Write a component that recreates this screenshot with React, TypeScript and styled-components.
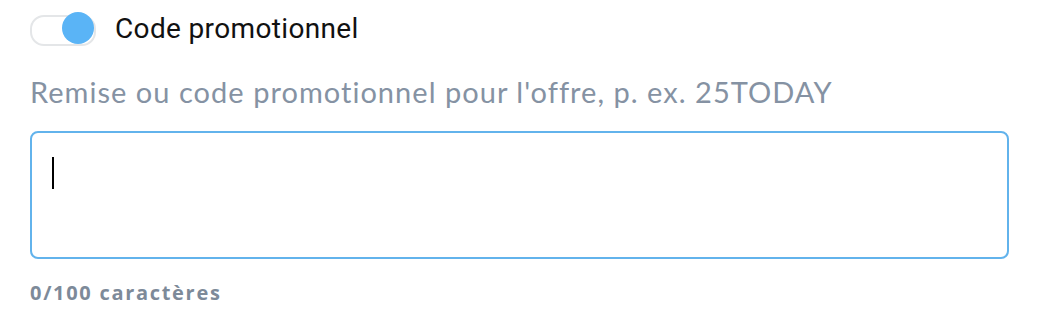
import React, { useState } from "react";
import styled, { createGlobalStyle } from "styled-components";

const Global = createGlobalStyle`
  html, body { margin: 0; padding: 0; background: #ffffff; }
  * { box-sizing: border-box; }
`;

const Page = styled.div`
  display: flex;
  flex-direction: column;
  padding: 12px 37px 0 30px;
  width: 1046px;
`;

const ToggleRow = styled.div`
  display: flex;
  align-items: center;
  gap: 21px;
  height: 32px;
`;

const Track = styled.button<{ $on: boolean }>`
  position: relative;
  width: 64px;
  height: 32px;
  padding: 0;
  border: none;
  background: transparent;
  cursor: pointer;
  flex-shrink: 0;
  &::before {
    content: "";
    position: absolute;
    left: 0;
    top: 3px;
    width: 62px;
    height: 27px;
    border-radius: 14px;
    border: 2px solid #e4e6e8;
    background: #ffffff;
  }
`;

const Knob = styled.span<{ $on: boolean }>`
  position: absolute;
  top: 0;
  left: ${(p) => (p.$on ? "32px" : "0")};
  width: 32px;
  height: 32px;
  border-radius: 50%;
  background: #5ab4f6;
`;

const ToggleLabel = styled.span`
  font-family: Roboto, "Liberation Sans", sans-serif;
  font-size: 28px;
  color: #111111;
  letter-spacing: 0.35px;
`;

const Hint = styled.div`
  margin-top: 31px;
  font-family: Lato, "Liberation Sans", sans-serif;
  font-size: 29px;
  letter-spacing: 1.03px;
  color: #8592a3;
  line-height: 34px;
`;

const Field = styled.textarea`
  width: 979px;
  height: 128px;
  border: 2px solid #62b3ec;
  border-radius: 8px;
  padding: 24px 20px;
  font-family: Roboto, "Liberation Sans", sans-serif;
  font-size: 28px;
  resize: none;
  outline: none;
  color: #111;
`;

const Caret = styled.span`
  position: absolute;
  left: 22px;
  top: 26px;
  width: 2px;
  height: 32px;
  background: #000;
`;

const FieldWrap = styled.div`
  position: relative;
  margin-top: 22px;
  display: flex;
`;

const Counter = styled.div`
  margin-top: 20px;
  font-family: "Open Sans", sans-serif;
  font-weight: 700;
  font-size: 20px;
  letter-spacing: 1.7px;
  color: #7d8a99;
`;

export default function App() {
  const [on, setOn] = useState(true);
  const [value, setValue] = useState("");
  return (
    <>
      <Global />
      <Page>
        <ToggleRow>
          <Track $on={on} onClick={() => setOn(!on)} aria-label="toggle">
            <Knob $on={on} />
          </Track>
          <ToggleLabel>Code promotionnel</ToggleLabel>
        </ToggleRow>
        <Hint>Remise ou code promotionnel pour l'offre, p. ex. 25TODAY</Hint>
        <FieldWrap>
          <Field value={value} onChange={(e) => setValue(e.target.value)} />
          {value === "" && <Caret />}
        </FieldWrap>
        <Counter>{value.length}/100 caractères</Counter>
      </Page>
    </>
  );
}
